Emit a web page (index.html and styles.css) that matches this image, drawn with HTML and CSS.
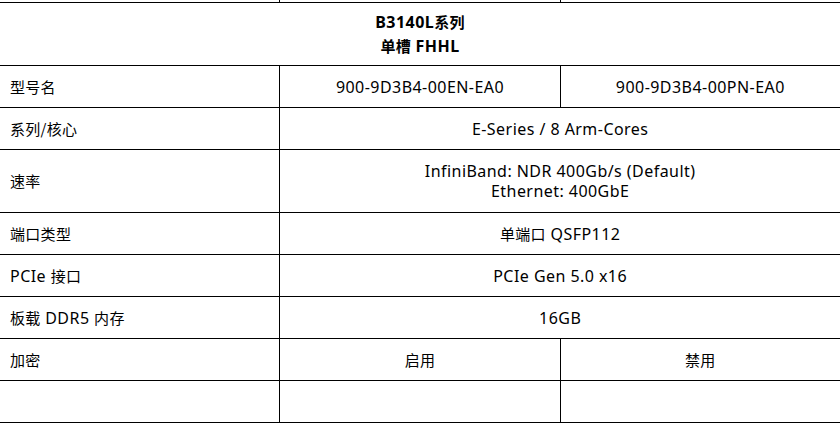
FILE: index.html
```html
<!DOCTYPE html>
<html lang="zh-CN">
<head>
<meta charset="utf-8">
<title>B3140L</title>
<link rel="stylesheet" href="styles.css">
</head>
<body>
<table class="spec">
  <colgroup><col class="c"><col class="c"><col class="c"></colgroup>
  <tr class="r-cut"><td></td><td></td><td></td></tr>
  <tr class="r-title"><th colspan="3">B3140L<span class="zh">系列</span><br><span class="zh">单槽</span> FHHL</th></tr>
  <tr class="r"><td class="k"><span class="zh">型号名</span></td><td>900-9D3B4-00EN-EA0</td><td>900-9D3B4-00PN-EA0</td></tr>
  <tr class="r"><td class="k"><span class="zh">系列/核心</span></td><td colspan="2">E-Series / 8 Arm-Cores</td></tr>
  <tr class="r-tall"><td class="k"><span class="zh">速率</span></td><td colspan="2">InfiniBand: NDR 400Gb/s (Default)<br>Ethernet: 400GbE</td></tr>
  <tr class="r"><td class="k"><span class="zh">端口类型</span></td><td colspan="2"><span class="zh">单端口</span> QSFP112</td></tr>
  <tr class="r"><td class="k">PCIe <span class="zh">接口</span></td><td colspan="2">PCIe Gen 5.0 x16</td></tr>
  <tr class="r"><td class="k"><span class="zh">板载</span> DDR5 <span class="zh">内存</span></td><td colspan="2">16GB</td></tr>
  <tr class="r"><td class="k"><span class="zh">加密</span></td><td><span class="zh">启用</span></td><td><span class="zh">禁用</span></td></tr>
  <tr class="r"><td class="k"></td><td></td><td></td></tr>
</table>
</body>
</html>
```
FILE: styles.css
```css
html, body {
  margin: 0;
  padding: 0;
  background: #fff;
  overflow: hidden;
}
.spec {
  border-collapse: collapse;
  table-layout: fixed;
  width: 842px;
  margin: -1px 0 0 -1px;
  font-family: "Noto Sans", "Noto Sans CJK SC", sans-serif;
  font-size: 16px;
  letter-spacing: 0.45px;
  color: #000;
}
.c { width: 280px; }
.spec td, .spec th {
  border: 1px solid #000;
  padding: 0 10px;
  text-align: center;
  vertical-align: middle;
  line-height: 20px;
}
.spec .zh {
  font-family: "Noto Sans CJK SC", sans-serif;
  font-size: 15px;
  letter-spacing: 0.3px;
}
.spec td.k { text-align: left; }
.spec th { font-weight: bold; line-height: 23px; }
.r-cut td { height: 2px; padding: 0; }
.r-title th { height: 62px; padding: 0; }
.r td { height: 41px; padding-top: 0; padding-bottom: 0; }
.r-tall td { height: 62px; }
```
